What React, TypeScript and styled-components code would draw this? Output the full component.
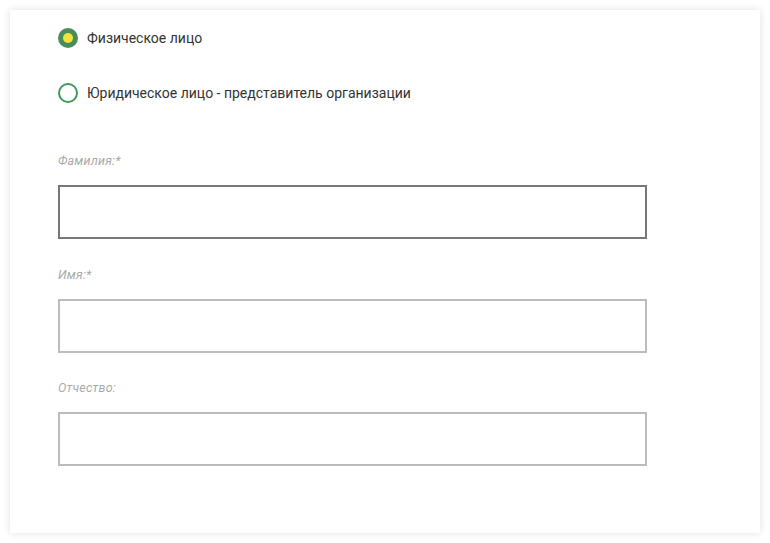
import React, { useState } from 'react';
import styled, { createGlobalStyle } from 'styled-components';

const GlobalStyle = createGlobalStyle`
  html, body {
    margin: 0;
    padding: 0;
    background: #ffffff;
  }
  body {
    font-family: Roboto, "Liberation Sans", Arial, sans-serif;
  }
`;

const Page = styled.div`
  padding: 10px;
  width: 770px;
  height: 543px;
  box-sizing: border-box;
`;

const Card = styled.div`
  width: 750px;
  height: 523px;
  box-sizing: border-box;
  background: #fff;
  box-shadow: 0 0 8px rgba(0, 0, 0, 0.12);
  padding: 18px 0 0 48px;
`;

const RadioGroup = styled.div`
  display: flex;
  flex-direction: column;
  gap: 35px;
`;

const RadioRow = styled.label`
  display: flex;
  align-items: center;
  gap: 9px;
  height: 20px;
  cursor: pointer;
  font-size: 14px;
  color: #333;
`;

const RadioMark = styled.span<{ $checked: boolean }>`
  width: 20px;
  height: 20px;
  box-sizing: border-box;
  border-radius: 50%;
  display: flex;
  align-items: center;
  justify-content: center;
  flex-shrink: 0;
  background: ${(p) => (p.$checked ? '#4a8c5c' : '#fff')};
  border: 2px solid ${(p) => (p.$checked ? '#4a8c5c' : '#3f9a5c')};

  &::after {
    content: '';
    display: ${(p) => (p.$checked ? 'block' : 'none')};
    width: 10px;
    height: 10px;
    border-radius: 50%;
    background: #f2e43a;
  }
`;

const Fields = styled.div`
  margin-top: 51px;
  display: flex;
  flex-direction: column;
  gap: 28.5px;
`;

const Field = styled.div`
  display: flex;
  flex-direction: column;
  gap: 17px;
`;

const Label = styled.span`
  font-size: 12.5px;
  line-height: 14px;
  font-style: italic;
  letter-spacing: 0.2px;
  color: #aaaaaa;
`;

const Input = styled.input<{ $focused?: boolean }>`
  width: 589px;
  height: 54px;
  box-sizing: border-box;
  border: 2px solid ${(p) => (p.$focused ? '#777' : '#bcbcbc')};
  background: #fff;
  outline: none;
  font-size: 14px;
  padding: 0 12px;
`;

const App = () => {
  const [kind, setKind] = useState('person');

  return (
    <Page>
      <GlobalStyle />
      <Card>
        <RadioGroup>
          <RadioRow onClick={() => setKind('person')}>
            <RadioMark $checked={kind === 'person'} />
            Физическое лицо
          </RadioRow>
          <RadioRow onClick={() => setKind('org')}>
            <RadioMark $checked={kind === 'org'} />
            Юридическое лицо - представитель организации
          </RadioRow>
        </RadioGroup>
        <Fields>
          <Field>
            <Label>Фамилия:*</Label>
            <Input $focused />
          </Field>
          <Field>
            <Label>Имя:*</Label>
            <Input />
          </Field>
          <Field>
            <Label>Отчество:</Label>
            <Input />
          </Field>
        </Fields>
      </Card>
    </Page>
  );
};

export default App;
